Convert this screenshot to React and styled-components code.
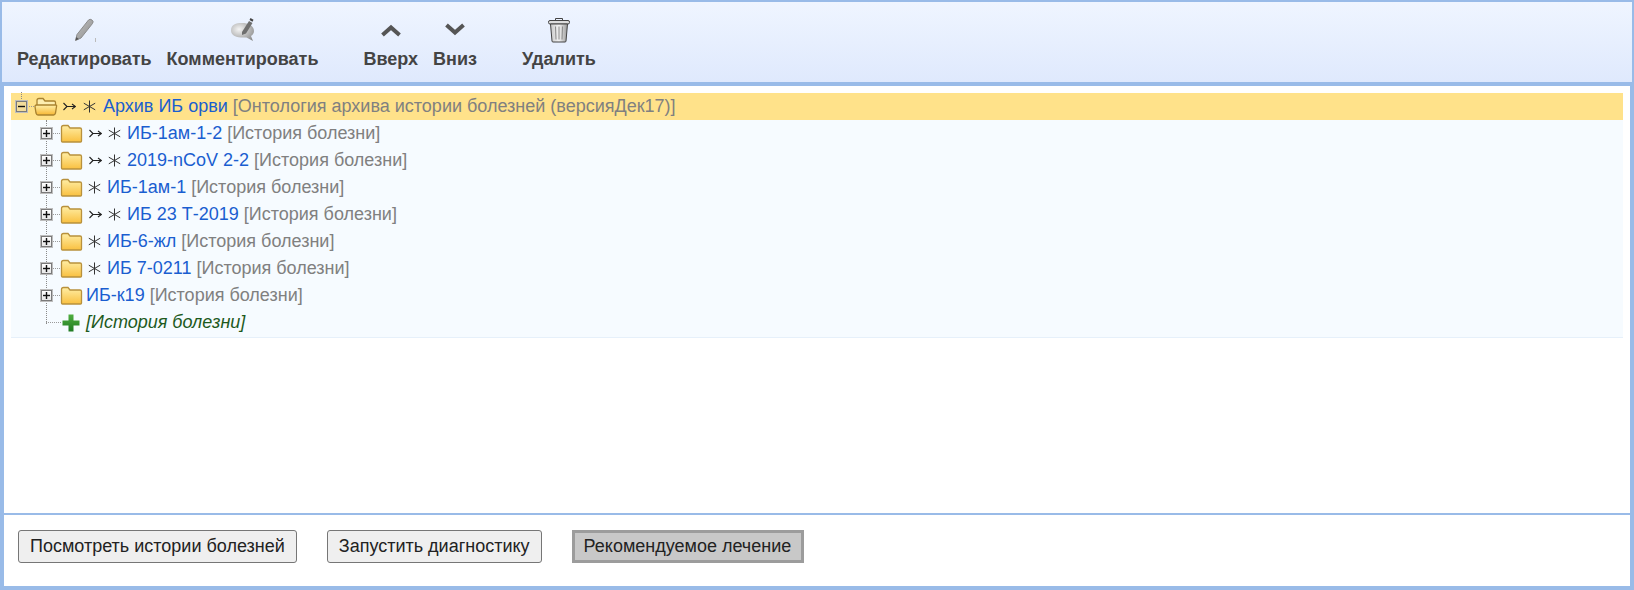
import React from "react";
import styled, { createGlobalStyle } from "styled-components";

const Global = createGlobalStyle`
  html, body { margin: 0; padding: 0; background: #fff; }
  body { font-family: "Liberation Sans", Arial, sans-serif; }
`;

const Page = styled.div`
  width: 1634px;
  height: 590px;
  box-sizing: border-box;
  display: flex;
  flex-direction: column;
  background: #99bbe8;
  padding: 2px 2px 4px 2px;
  overflow: hidden;
`;

const Toolbar = styled.div`
  height: 80px;
  flex: none;
  display: flex;
  align-items: flex-start;
  padding-left: 15px;
  background: linear-gradient(#eff5ff, #dfe9fd);
`;

const ToolItem = styled.div`
  display: flex;
  flex-direction: column;
  align-items: center;
  margin-left: ${(p) => p.$left || 0}px;
  padding-top: 14px;
`;

const ToolIcon = styled.div`
  height: 28px;
  display: flex;
  align-items: center;
  justify-content: center;
`;

const ToolLabel = styled.div`
  margin-top: 5px;
  font-size: 18px;
  font-weight: bold;
  line-height: 20px;
  color: #444;
  white-space: nowrap;
`;

const Body = styled.div`
  flex: 1;
  display: flex;
  flex-direction: column;
  margin: 4px 2px 0 2px;
  background: #fff;
`;

const TreeArea = styled.div`
  height: 427px;
  flex: none;
  box-sizing: border-box;
  padding: 7px 7px 0 7px;
`;

const Tree = styled.div`
  background: #f6fbff;
  border-bottom: 1px solid #e6f0fa;
  padding-bottom: 1px;
`;

const Row = styled.div`
  height: 27px;
  display: flex;
  align-items: center;
  padding-left: ${(p) => p.$indent}px;
  background: ${(p) => (p.$selected ? "#ffe28a" : "transparent")};
  font-size: 18px;
  white-space: nowrap;
`;

const Branches = styled.div`
  position: relative;
`;

const VLine = styled.span`
  position: absolute;
  left: 35px;
  top: 0;
  height: 204px;
  border-left: 1px dotted #8a8a8a;
`;

const HLine = styled.span`
  width: ${(p) => p.$w}px;
  flex: none;
  border-top: 1px dotted #9a9a9a;
`;

const ExpanderBox = styled.span`
  width: 11px;
  height: 11px;
  flex: none;
  box-sizing: border-box;
  border: 1px solid #7a7a7a;
  outline: 1px solid #bdbdbd;
  background: ${(p) => (p.$open ? "#f3dc9a" : "linear-gradient(#fff, #e8e8e8)")};
  display: flex;
  align-items: center;
  justify-content: center;
  position: relative;
  z-index: 1;

  ${(p) =>
    p.$open &&
    `&::before {
      content: "";
      position: absolute;
      left: 4px;
      top: -10px;
      height: 7px;
      border-left: 1px dotted #8a8a8a;
    }`}
`;

const Link = styled.span`
  color: #1a5ed0;
  margin-left: ${(p) => p.$left}px;
`;

const TypeName = styled.span`
  color: #808080;
  margin-left: 5px;
`;

const NewType = styled.span`
  color: #1d5a1d;
  font-style: italic;
  margin-left: 5px;
`;

const GlyphSlot = styled.span`
  flex: none;
  display: flex;
  align-items: center;
  margin-left: ${(p) => p.$left || 0}px;
`;

const Footer = styled.div`
  flex: 1;
  display: flex;
  align-items: flex-start;
  border-top: 2px solid #99bbe8;
  padding: 15px 0 0 14px;
`;

const Button = styled.button`
  height: 33px;
  box-sizing: border-box;
  margin-right: ${(p) => p.$gap || 0}px;
  padding: ${(p) => (p.$active ? "0 10px 0 9px" : "0 11px")};
  font: 18px "Liberation Sans", Arial, sans-serif;
  color: #222;
  background: ${(p) => (p.$active ? "#c8c8c8" : "#efefef")};
  border-radius: ${(p) => (p.$active ? 0 : 3)}px;
  border: ${(p) => (p.$active ? "3px solid #9c9c9c" : "1px solid #767676")};
`;

const Expander = ({ open }) => (
  <ExpanderBox $open={open}>
    <svg width="7" height="7" viewBox="0 0 7 7">
      <path d="M0 3.500h7" stroke="#111" strokeWidth="1.400" />
      {!open && <path d="M3.500 0v7" stroke="#111" strokeWidth="1.400" />}
    </svg>
  </ExpanderBox>
);

const FolderClosed = () => (
  <svg width="23" height="19" viewBox="0 0 23 19">
    <defs>
      <linearGradient id="fc" x1="0" y1="0" x2="0" y2="1">
        <stop offset="0" stopColor="#ffeea5" />
        <stop offset="1" stopColor="#f9c040" />
      </linearGradient>
    </defs>
    <path
      d="M1.500 17V3.500Q1.500 1.500 3.500 1.500H8l2 2.500h10q1.500 0 1.500 1.500V17q0 1-1 1H2.500q-1 0-1-1z"
      fill="url(#fc)"
      stroke="#b8913c"
      strokeWidth="1.300"
    />
  </svg>
);

const FolderOpen = () => (
  <svg width="24" height="19" viewBox="0 0 24 19">
    <defs>
      <linearGradient id="fo" x1="0" y1="0" x2="0" y2="1">
        <stop offset="0" stopColor="#ffefa8" />
        <stop offset="1" stopColor="#f7b733" />
      </linearGradient>
    </defs>
    <path d="M3 9V3.500Q3 1.500 5 1.500h4l2 2.500h9q1.500 0 1.500 1.500V9" fill="#fdeeb0" stroke="#a9822f" strokeWidth="1.300" />
    <path
      d="M1 9.500Q1 8 2.500 8h19q1.500 0 1 1.500L21.500 16q-.5 2-2 2H4q-1.500 0-2-2z"
      fill="url(#fo)"
      stroke="#a9822f"
      strokeWidth="1.300"
    />
  </svg>
);

const Arrow = () => (
  <svg width="13" height="9" viewBox="0 0 13 9">
    <path
      d="M0.500 1l3.500 3.500-3.500 3.500M3 4.500h9.500M9 2l3.500 2.500-3.500 2.500"
      fill="none"
      stroke="#222"
      strokeWidth="1.100"
    />
  </svg>
);

const Star = () => (
  <svg width="13" height="13" viewBox="0 0 13 13">
    <path
      d="M6.500 0.500v12M0.800 3.200l11.400 6.600M0.800 9.800l11.400-6.600"
      stroke="#333"
      strokeWidth="1"
      fill="none"
    />
  </svg>
);

const GreenPlus = () => (
  <svg width="20" height="20" viewBox="0 0 20 20">
    <defs>
      <linearGradient id="gp" x1="0" y1="0" x2="0" y2="1">
        <stop offset="0" stopColor="#4fae3f" />
        <stop offset="1" stopColor="#1f7a22" />
      </linearGradient>
    </defs>
    <path d="M7.500 1.500h5v6h6v5h-6v6h-5v-6h-6v-5h6z" fill="url(#gp)" />
  </svg>
);

const Pencil = () => (
  <svg width="24" height="26" viewBox="0 0 24 26">
    <defs>
      <linearGradient id="pen" x1="0" y1="0" x2="1" y2="1">
        <stop offset="0" stopColor="#c4c4c4" />
        <stop offset="1" stopColor="#8a8a8a" />
      </linearGradient>
    </defs>
    <path d="M5 17.500L16.500 3q1.500-1.500 3.500 0t.5 3.500L9 21l-5.500 2.500z" fill="url(#pen)" stroke="#8b8b8b" />
    <path d="M3.500 23.500l.8-3.500 2.500 2z" fill="#555" />
    <path d="M23.500 21v4" stroke="#bbb" />
  </svg>
);

const CommentIcon = () => (
  <svg width="26" height="26" viewBox="0 0 26 26">
    <defs>
      <radialGradient id="bub" cx="0.350" cy="0.350" r="0.800">
        <stop offset="0" stopColor="#f4f4f4" />
        <stop offset="1" stopColor="#8a8a8a" />
      </radialGradient>
    </defs>
    <path d="M12 6c6 0 12 2.500 12 8 0 2.500-1.500 4-3 5l2 5-6.500-3.500C8 21 1 19.500 1 13.500S6 6 12 6z" fill="url(#bub)" />
    <path d="M12 15l7-11 3.500 2-6.500 10.500-4 1.500z" fill="#6e6e6e" />
    <path d="M20.500 1l3 1.800-1 2-3-1.800z" fill="#444" />
  </svg>
);

const Chevron = ({ up }) => (
  <svg width="20" height="16" viewBox="0 0 20 16">
    <path
      d={up ? "M1.500 13L10 5.500 18.500 13" : "M1.500 3L10 10.500 18.500 3"}
      fill="none"
      stroke="#555"
      strokeWidth="4"
    />
  </svg>
);

const Trash = () => (
  <svg width="24" height="26" viewBox="0 0 24 26">
    <defs>
      <linearGradient id="can" x1="0" y1="0" x2="1" y2="0">
        <stop offset="0" stopColor="#c8c8c8" />
        <stop offset="0.500" stopColor="#f2f2f2" />
        <stop offset="1" stopColor="#999" />
      </linearGradient>
    </defs>
    <path d="M8.500 3.500V1.500h7v2" fill="none" stroke="#444" />
    <rect x="1.500" y="3.500" width="21" height="3.500" rx="1.500" fill="#ddd" stroke="#444" />
    <path d="M3.500 7l1.500 17q0 1 1 1h12q1 0 1-1l1.500-17z" fill="url(#can)" stroke="#444" />
    <path d="M8.500 9.500l.5 13M12 9.500v13M15.500 9.500l-.5 13" stroke="#888" />
  </svg>
);

const tools = [
  { label: "Редактировать", icon: <Pencil />, left: 0 },
  { label: "Комментировать", icon: <CommentIcon />, left: 15 },
  { label: "Вверх", icon: <Chevron up />, left: 45 },
  { label: "Вниз", icon: <Chevron />, left: 15 },
  { label: "Удалить", icon: <Trash />, left: 45 },
];

const children = [
  { name: "ИБ-1ам-1-2", arrow: true, star: true },
  { name: "2019-nCoV 2-2", arrow: true, star: true },
  { name: "ИБ-1ам-1", star: true },
  { name: "ИБ 23 Т-2019", arrow: true, star: true },
  { name: "ИБ-6-жл", star: true },
  { name: "ИБ 7-0211", star: true },
  { name: "ИБ-к19" },
];

const ChildRow = ({ name, arrow, star }) => (
  <Row $indent={30}>
    <Expander />
    <HLine $w={8} />
    <FolderClosed />
    {arrow && (
      <GlyphSlot $left={6}>
        <Arrow />
      </GlyphSlot>
    )}
    {star && (
      <GlyphSlot $left={arrow ? 6 : 5}>
        <Star />
      </GlyphSlot>
    )}
    <Link $left={star ? 6 : 3}>{name}</Link>
    <TypeName>[История болезни]</TypeName>
  </Row>
);

export default function App() {
  return (
    <>
      <Global />
      <Page>
        <Toolbar>
          {tools.map((t) => (
            <ToolItem key={t.label} $left={t.left}>
              <ToolIcon>{t.icon}</ToolIcon>
              <ToolLabel>{t.label}</ToolLabel>
            </ToolItem>
          ))}
        </Toolbar>
        <Body>
          <TreeArea>
            <Tree>
              <Row $selected $indent={5}>
                <Expander open />
                <HLine $w={7} />
                <FolderOpen />
                <GlyphSlot $left={5}>
                  <Arrow />
                </GlyphSlot>
                <GlyphSlot $left={7}>
                  <Star />
                </GlyphSlot>
                <Link $left={7}>Архив ИБ орви</Link>
                <TypeName>[Онтология архива истории болезней (версияДек17)]</TypeName>
              </Row>
              <Branches>
                <VLine />
                {children.map((c) => (
                  <ChildRow key={c.name} {...c} />
                ))}
                <Row $indent={35}>
                  <HLine $w={15} />
                  <GreenPlus />
                  <NewType>[История болезни]</NewType>
                </Row>
              </Branches>
            </Tree>
          </TreeArea>
          <Footer>
            <Button $gap={30}>Посмотреть истории болезней</Button>
            <Button $gap={30}>Запустить диагностику</Button>
            <Button $active>Рекомендуемое лечение</Button>
          </Footer>
        </Body>
      </Page>
    </>
  );
}
